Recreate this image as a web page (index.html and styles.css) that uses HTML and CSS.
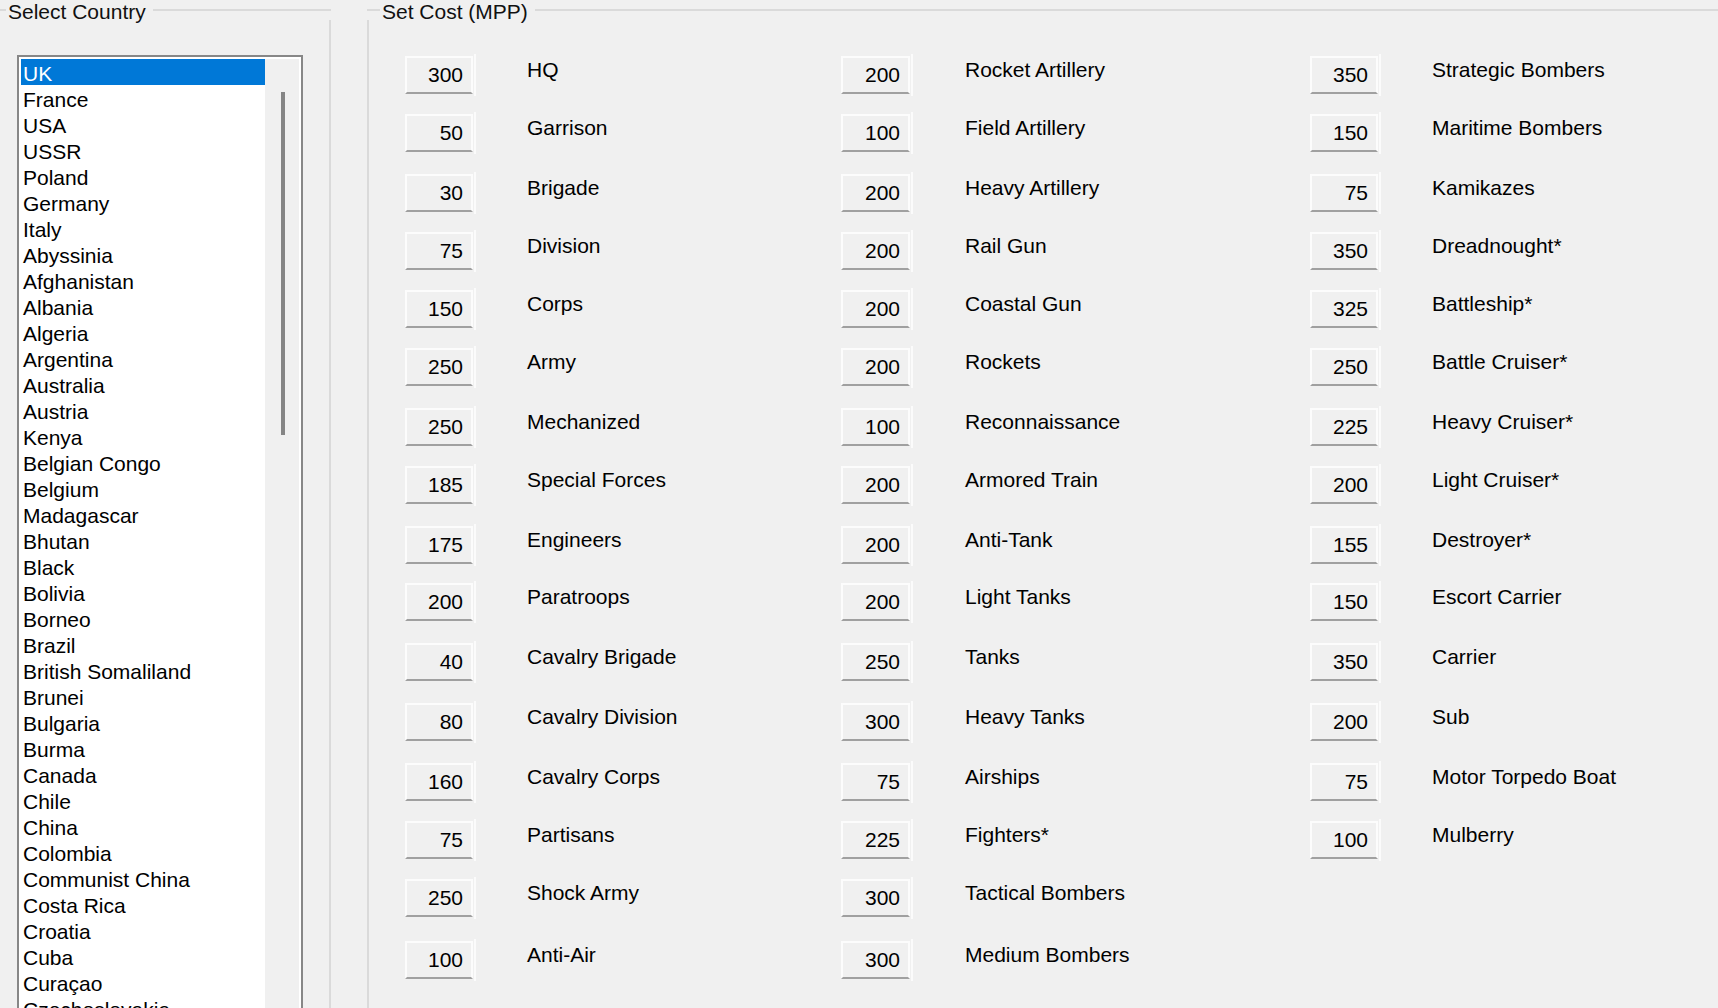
FILE: index.html
```html
<!DOCTYPE html>
<html>
<head>
<meta charset="utf-8">
<link rel="stylesheet" href="styles.css">
</head>
<body>
<div class="dialog">
  <section class="group group-country">
    <div class="group-head">
      <span class="seg seg-start"></span>
      <span class="title">Select Country</span>
      <span class="seg seg-grow"></span>
    </div>
    <div class="group-body country-body">
      <div class="listbox">
        <ul class="list">
          <li class="selected">UK</li>
          <li>France</li>
          <li>USA</li>
          <li>USSR</li>
          <li>Poland</li>
          <li>Germany</li>
          <li>Italy</li>
          <li>Abyssinia</li>
          <li>Afghanistan</li>
          <li>Albania</li>
          <li>Algeria</li>
          <li>Argentina</li>
          <li>Australia</li>
          <li>Austria</li>
          <li>Kenya</li>
          <li>Belgian Congo</li>
          <li>Belgium</li>
          <li>Madagascar</li>
          <li>Bhutan</li>
          <li>Black</li>
          <li>Bolivia</li>
          <li>Borneo</li>
          <li>Brazil</li>
          <li>British Somaliland</li>
          <li>Brunei</li>
          <li>Bulgaria</li>
          <li>Burma</li>
          <li>Canada</li>
          <li>Chile</li>
          <li>China</li>
          <li>Colombia</li>
          <li>Communist China</li>
          <li>Costa Rica</li>
          <li>Croatia</li>
          <li>Cuba</li>
          <li>Curaçao</li>
          <li>Czechoslovakia</li>
        </ul>
        <div class="scrolltrack"><div class="thumb"></div></div>
      </div>
    </div>
  </section>

  <section class="group group-cost">
    <div class="group-head">
      <span class="seg seg-start-cost"></span>
      <span class="title">Set Cost (MPP)</span>
      <span class="seg seg-grow"></span>
    </div>
    <div class="group-body cost-body">
      <div class="cost-grid">
        <div class="cost"><span class="val">300</span><span class="spin"></span><span class="name">HQ</span></div>
        <div class="cost"><span class="val">50</span><span class="spin"></span><span class="name">Garrison</span></div>
        <div class="cost"><span class="val">30</span><span class="spin"></span><span class="name">Brigade</span></div>
        <div class="cost"><span class="val">75</span><span class="spin"></span><span class="name">Division</span></div>
        <div class="cost"><span class="val">150</span><span class="spin"></span><span class="name">Corps</span></div>
        <div class="cost"><span class="val">250</span><span class="spin"></span><span class="name">Army</span></div>
        <div class="cost"><span class="val">250</span><span class="spin"></span><span class="name">Mechanized</span></div>
        <div class="cost"><span class="val">185</span><span class="spin"></span><span class="name">Special Forces</span></div>
        <div class="cost"><span class="val">175</span><span class="spin"></span><span class="name">Engineers</span></div>
        <div class="cost"><span class="val">200</span><span class="spin"></span><span class="name">Paratroops</span></div>
        <div class="cost"><span class="val">40</span><span class="spin"></span><span class="name">Cavalry Brigade</span></div>
        <div class="cost"><span class="val">80</span><span class="spin"></span><span class="name">Cavalry Division</span></div>
        <div class="cost"><span class="val">160</span><span class="spin"></span><span class="name">Cavalry Corps</span></div>
        <div class="cost"><span class="val">75</span><span class="spin"></span><span class="name">Partisans</span></div>
        <div class="cost"><span class="val">250</span><span class="spin"></span><span class="name">Shock Army</span></div>
        <div class="cost"><span class="val">100</span><span class="spin"></span><span class="name">Anti-Air</span></div>

        <div class="cost c2"><span class="val">200</span><span class="spin"></span><span class="name">Rocket Artillery</span></div>
        <div class="cost c2"><span class="val">100</span><span class="spin"></span><span class="name">Field Artillery</span></div>
        <div class="cost c2"><span class="val">200</span><span class="spin"></span><span class="name">Heavy Artillery</span></div>
        <div class="cost c2"><span class="val">200</span><span class="spin"></span><span class="name">Rail Gun</span></div>
        <div class="cost c2"><span class="val">200</span><span class="spin"></span><span class="name">Coastal Gun</span></div>
        <div class="cost c2"><span class="val">200</span><span class="spin"></span><span class="name">Rockets</span></div>
        <div class="cost c2"><span class="val">100</span><span class="spin"></span><span class="name">Reconnaissance</span></div>
        <div class="cost c2"><span class="val">200</span><span class="spin"></span><span class="name">Armored Train</span></div>
        <div class="cost c2"><span class="val">200</span><span class="spin"></span><span class="name">Anti-Tank</span></div>
        <div class="cost c2"><span class="val">200</span><span class="spin"></span><span class="name">Light Tanks</span></div>
        <div class="cost c2"><span class="val">250</span><span class="spin"></span><span class="name">Tanks</span></div>
        <div class="cost c2"><span class="val">300</span><span class="spin"></span><span class="name">Heavy Tanks</span></div>
        <div class="cost c2"><span class="val">75</span><span class="spin"></span><span class="name">Airships</span></div>
        <div class="cost c2"><span class="val">225</span><span class="spin"></span><span class="name">Fighters*</span></div>
        <div class="cost c2"><span class="val">300</span><span class="spin"></span><span class="name">Tactical Bombers</span></div>
        <div class="cost c2"><span class="val">300</span><span class="spin"></span><span class="name">Medium Bombers</span></div>

        <div class="cost"><span class="val">350</span><span class="spin"></span><span class="name">Strategic Bombers</span></div>
        <div class="cost"><span class="val">150</span><span class="spin"></span><span class="name">Maritime Bombers</span></div>
        <div class="cost"><span class="val">75</span><span class="spin"></span><span class="name">Kamikazes</span></div>
        <div class="cost"><span class="val">350</span><span class="spin"></span><span class="name">Dreadnought*</span></div>
        <div class="cost"><span class="val">325</span><span class="spin"></span><span class="name">Battleship*</span></div>
        <div class="cost"><span class="val">250</span><span class="spin"></span><span class="name">Battle Cruiser*</span></div>
        <div class="cost"><span class="val">225</span><span class="spin"></span><span class="name">Heavy Cruiser*</span></div>
        <div class="cost"><span class="val">200</span><span class="spin"></span><span class="name">Light Cruiser*</span></div>
        <div class="cost"><span class="val">155</span><span class="spin"></span><span class="name">Destroyer*</span></div>
        <div class="cost"><span class="val">150</span><span class="spin"></span><span class="name">Escort Carrier</span></div>
        <div class="cost"><span class="val">350</span><span class="spin"></span><span class="name">Carrier</span></div>
        <div class="cost"><span class="val">200</span><span class="spin"></span><span class="name">Sub</span></div>
        <div class="cost"><span class="val">75</span><span class="spin"></span><span class="name">Motor Torpedo Boat</span></div>
        <div class="cost"><span class="val">100</span><span class="spin"></span><span class="name">Mulberry</span></div>
      </div>
    </div>
  </section>
</div>
</body>
</html>
```

FILE: styles.css
```css
html, body {
  margin: 0;
  padding: 0;
  height: 1008px;
  overflow: hidden;
  background: #f0f0f0;
}

body {
  font-family: "Liberation Sans", Arial, sans-serif;
  font-size: 21px;
  color: #000;
}

.dialog {
  display: flex;
  align-items: stretch;
  height: 1040px;
}

.group {
  display: flex;
  flex-direction: column;
}

.group-country {
  width: 335px;
  margin-left: -4px;
}

.group-cost {
  margin-left: 36px;
  flex: 1;
  margin-right: -20px;
}

.group-head {
  display: flex;
  align-items: center;
  height: 20px;
}

.seg {
  height: 2px;
  background: #dadada;
}

.seg-start {
  width: 10px;
}

.seg-start-cost {
  width: 13px;
}

.seg-grow {
  flex: 1;
}

.title {
  line-height: 24px;
  padding: 4px 7px 0 2px;
  white-space: nowrap;
  color: #111;
}

.group-body {
  flex: 1;
  border-left: 2px solid #dadada;
  border-right: 2px solid #dadada;
}

/* ---------- country list ---------- */
.country-body {
  padding: 35px 0 0 19px;
}

.listbox {
  display: flex;
  width: 286px;
  height: 980px;
  box-sizing: border-box;
  border: 2px solid #878787;
  padding: 2px;
  background: #fff;
}

.list {
  list-style: none;
  margin: 0;
  padding: 0;
  width: 244px;
  overflow: hidden;
}

.list li {
  height: 26px;
  line-height: 30px;
  padding-left: 2px;
  white-space: nowrap;
  overflow: hidden;
}

.list li.selected {
  background: #0078d7;
  color: #fff;
}

.scrolltrack {
  flex: 1;
  background: #f0f0f0;
  padding: 33px 0 0 16px;
}

.thumb {
  width: 4px;
  height: 343px;
  background: #858585;
}

/* ---------- cost grid ---------- */
.cost-body {
  padding: 36px 0 0 36px;
}

.cost-grid {
  display: grid;
  grid-auto-flow: column;
  grid-template-columns: 436px 469px 1fr;
  grid-template-rows: 58px 60px 58px 58px 58px 60px 58px 60px 57px 60px 60px 60px 58px 58px 62px 40px;
}

.cost {
  display: flex;
  align-items: flex-start;
}

.val {
  width: 68px;
  height: 38px;
  box-sizing: border-box;
  border: 2px solid #fcfcfc;
  border-bottom-color: #a0a0a0;
  padding-right: 8px;
  line-height: 34px;
  text-align: right;
  background: #f0f0f0;
}

.c2 .val {
  width: 69px;
}

.spin {
  width: 2px;
  height: 42px;
  margin-top: -2px;
  margin-left: 1px;
  background: #fbfbfb;
}

.name {
  margin-left: 51px;
  margin-top: 2px;
  line-height: 24px;
  white-space: nowrap;
}

.c2 .name {
  margin-left: 52px;
}
```
